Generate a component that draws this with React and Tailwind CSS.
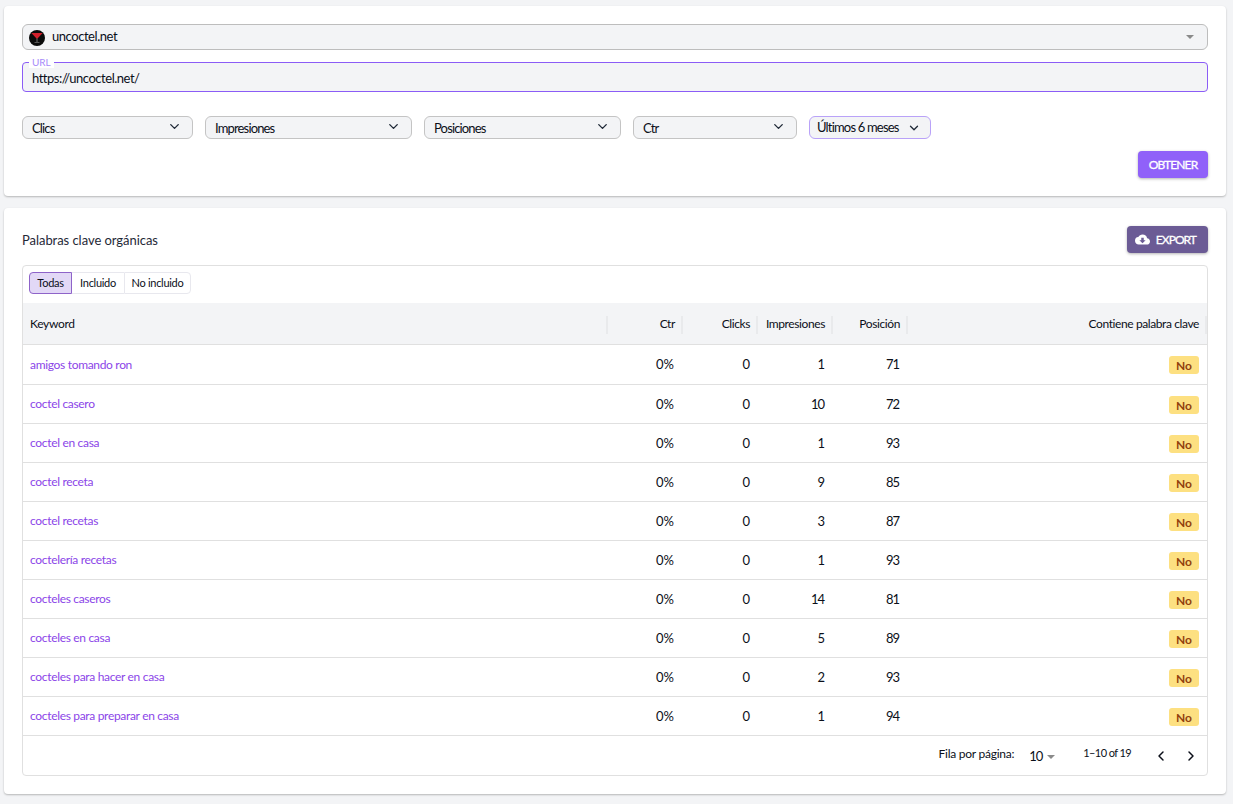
import React from 'react';
import { ChevronDown, ChevronLeft, ChevronRight } from 'lucide-react';

const rows = [
  ['amigos tomando ron', '1', '71'],
  ['coctel casero', '10', '72'],
  ['coctel en casa', '1', '93'],
  ['coctel receta', '9', '85'],
  ['coctel recetas', '3', '87'],
  ['coctelería recetas', '1', '93'],
  ['cocteles caseros', '14', '81'],
  ['cocteles en casa', '5', '89'],
  ['cocteles para hacer en casa', '2', '93'],
  ['cocteles para preparar en casa', '1', '94'],
];

const Select = ({ label, width }) => (
  <div className={`${width} h-[23px] flex items-center justify-between pl-[9px] pr-[10px] bg-[#f3f4f6] border border-[#c4c4c4] rounded-md text-[13px] tracking-[-0.85px] text-[#0b0f19]`}>
    <span className="mt-[3px]">{label}</span>
    <ChevronDown size={15} strokeWidth={2.2} className="-mt-[3px] text-[#1f2937]" />
  </div>
);

const HeadCell = ({ children, sep = true }) => (
  <div className="relative flex items-center justify-end pr-2 text-[12px] tracking-[-0.4px] text-[#0b0f19] whitespace-nowrap">
    <span>{children}</span>
    {sep && <span className="absolute right-0 top-[13px] h-[18px] w-0.5 bg-[#e9eaec]" />}
  </div>
);

const App = () => {
  return (
    <div className="min-h-[804px] bg-[#f3f4f6] pt-1.5 pl-1 pr-[7px] pb-2.5 font-['Lato',sans-serif] text-[#0b0f19]">
      {/* Filtros */}
      <div className="h-[190px] bg-white rounded shadow-[0_1px_2px_rgba(0,0,0,0.25)] px-[18px] pt-[18px]">
        <div className="h-[26px] flex items-center justify-between pl-[6px] pr-[13px] bg-[#f3f4f6] border border-[#bdbdbd] rounded-md">
          <div className="flex items-center gap-[7px] text-[13px] tracking-[-0.45px]">
            <svg width="16" height="16" viewBox="0 0 16 16" className="mt-0.5">
              <circle cx="8" cy="8" r="8" fill="#0b0b0b" />
              <path d="M2.4 3h11.2L8 9z" fill="#d3202c" />
              <path d="M7.5 8.5h1v3.4h2v.9H5.5v-.9h2z" fill="#6f6f6f" />
            </svg>
            <span>uncoctel.net</span>
          </div>
          <span className="w-0 h-0 border-x-[4px] border-x-transparent border-t-[4px] border-t-[#8a8a8a]" />
        </div>

        <div className="relative mt-3 h-[30px] flex items-center pl-[9px] bg-[#f3f4f6] border border-[#8b5cf6] rounded text-[13px] tracking-[-0.48px]">
          <span className="absolute -top-[7px] left-[6px] px-[3px] bg-white text-[10px] leading-[12px] tracking-normal text-[#a78bfa]">URL</span>
          <span className="mt-[3px]">https://uncoctel.net/</span>
        </div>

        <div className="mt-6 flex gap-3">
          <Select label="Clics" width="w-[171px]" />
          <Select label="Impresiones" width="w-[207px]" />
          <Select label="Posiciones" width="w-[197px]" />
          <Select label="Ctr" width="w-[164px]" />
          <div className="w-[122px] h-[23px] flex items-center justify-between pl-[7px] pr-[9px] bg-[#f3f4f6] border border-[#b9a2f8] rounded-md text-[13px] tracking-[-0.82px] whitespace-nowrap">
            <span>Últimos 6 meses</span>
            <ChevronDown size={14} strokeWidth={2.2} className="text-[#1f2937]" />
          </div>
        </div>

        <div className="mt-3 flex justify-end">
          <button className="w-[70px] h-[27px] bg-[#9061f9] rounded text-white text-[12px] [-webkit-text-stroke:0.3px_white] tracking-[-0.9px] shadow-[0_1px_3px_rgba(0,0,0,0.3)]">
            OBTENER
          </button>
        </div>
      </div>

      {/* Palabras clave */}
      <div className="mt-3 h-[586px] bg-white rounded shadow-[0_1px_2px_rgba(0,0,0,0.25)] px-[18px] pt-[18px]">
        <div className="h-[27px] flex items-center justify-between">
          <h2 className="mt-[3px] text-[13px] font-normal tracking-[-0.05px] text-[#1f2937]">Palabras clave orgánicas</h2>
          <button className="w-[81px] h-[27px] flex items-center justify-end gap-[6px] pr-3 bg-[#6b5b95] rounded text-white text-[12px] [-webkit-text-stroke:0.3px_white] tracking-[-0.95px] shadow-[0_1px_3px_rgba(0,0,0,0.3)]">
            <svg width="15" height="15" viewBox="0 0 24 24" fill="white">
              <path d="M19.35 10.04A7.49 7.49 0 0 0 12 4C9.11 4 6.6 5.64 5.35 8.04A5.994 5.994 0 0 0 0 14c0 3.31 2.69 6 6 6h13c2.76 0 5-2.24 5-5 0-2.64-2.05-4.78-4.65-4.96zM17 13l-5 5-5-5h3V9h4v4h3z" />
            </svg>
            EXPORT
          </button>
        </div>

        <div className="mt-3 h-[511px] border border-[#e0e0e0] rounded">
          <div className="h-[37px] px-1.5 pt-1.5 flex items-start">
            <div className="flex h-[22px] text-[11px] tracking-[-0.3px]">
              <div className="w-[43px] flex items-center justify-center bg-[#e2d8f6] border border-[#8e63c9] rounded-l">Todas</div>
              <div className="w-[52px] flex items-center justify-center border-y border-[#e8e8ee]">Incluido</div>
              <div className="w-[67px] flex items-center justify-center border border-[#e8e8ee] rounded-r">No incluido</div>
            </div>
          </div>

          <div className="h-[42px] grid grid-cols-[585px_75px_75px_75px_75px_1fr] bg-[#f3f4f6] border-b border-[#e0e0e0]">
            <div className="relative flex items-center pl-[7px] text-[12px] tracking-[-0.3px]">
              <span>Keyword</span>
              <span className="absolute right-0 top-[13px] h-[18px] w-0.5 bg-[#e9eaec]" />
            </div>
            <HeadCell>Ctr</HeadCell>
            <HeadCell>Clicks</HeadCell>
            <HeadCell>Impresiones</HeadCell>
            <HeadCell>Posición</HeadCell>
            <HeadCell>Contiene palabra clave</HeadCell>
          </div>

          {rows.map(([keyword, impressions, position], i) => (
            <div
              key={keyword}
              className={`${i === 0 ? 'h-10' : 'h-[39px]'} grid grid-cols-[585px_75px_75px_75px_75px_1fr] items-center border-b border-[#e0e0e0] text-[13px]`}
            >
              <a className="pl-[7px] text-[12px] tracking-[-0.32px] text-[#8b45e8]">{keyword}</a>
              <div className="pr-[9px] mt-px text-right">0%</div>
              <div className="pr-2 mt-px text-right">0</div>
              <div className="pr-[9px] mt-px text-right tracking-[-1px]">{impressions}</div>
              <div className="pr-[9px] mt-px text-right tracking-[-1px]">{position}</div>
              <div className="pr-2 flex justify-end">
                <span className="w-[30px] h-[18px] flex items-center justify-center pt-0.5 mt-px bg-[#fde081] rounded-[3px] text-[12px] font-bold text-[#92400e]">No</span>
              </div>
            </div>
          ))}

          <div className="h-[38px] flex items-start justify-end pr-[8px] text-[12px] tracking-[-0.25px] whitespace-nowrap">
            <span className="mt-[9px]">Fila por página:</span>
            <span className="ml-[15px] mt-[11px] text-[13px] tracking-[-1px]">10</span>
            <span className="ml-[5px] mt-[19px] w-0 h-0 border-x-[4px] border-x-transparent border-t-[4px] border-t-[#8a8a8a]" />
            <span className="ml-[28px] mt-[9px] text-[11px] tracking-[-0.6px]">1–10 of 19</span>
            <ChevronLeft size={16} strokeWidth={2.2} className="ml-[22px] mt-3" />
            <ChevronRight size={16} strokeWidth={2.2} className="ml-[14px] mt-3" />
          </div>
        </div>
      </div>
    </div>
  );
};

export default App;
